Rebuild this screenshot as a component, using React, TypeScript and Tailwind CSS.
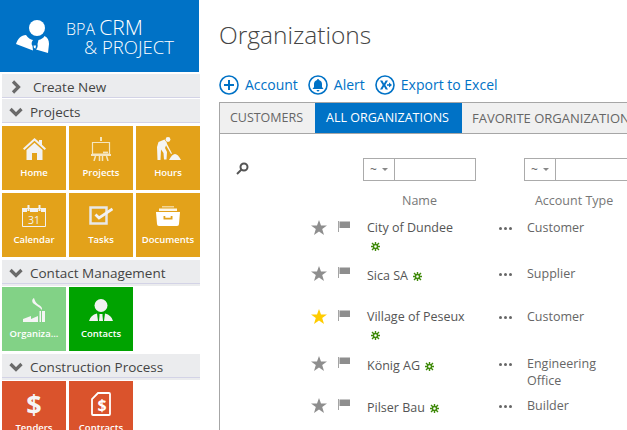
import type { ReactNode } from "react";

const Sans = "font-['Open_Sans','Noto_Sans',sans-serif]";

function HomeIcon() {
  return (
    <svg width="23" height="22" viewBox="0 0 23 22" fill="#f2f2f2">
      <path d="M11.500 0 0 10.500 1.300 12 11.500 2.700 21.700 12 23 10.500l-4-3.700V2h-3v2.100z" />
      <path d="M3.500 12v10h5.500v-7h5v7h5.500V12l-8-7.300z" />
    </svg>
  );
}

function EaselIcon() {
  return (
    <svg width="20" height="24" viewBox="0 0 20 24" fill="none" stroke="#f5e6c0" strokeWidth="1.200">
      <path d="M10 0v4" strokeWidth="2" />
      <path d="M1.500 5.500h17V17h-17z" />
      <path d="M0 18h20" strokeWidth="2" />
      <path d="M4.500 19 3 24M8.500 19v5M11.500 19v5M15.500 19l1.500 5" strokeWidth="1.500" />
      <path d="M12 15.500h5" strokeWidth="1.800" />
    </svg>
  );
}

function WorkerIcon() {
  return (
    <svg width="25" height="23" viewBox="0 0 25 23" fill="#f5f5f5">
      <circle cx="12" cy="2.500" r="2.400" />
      <path d="M2.500 5 8.500 2.500 11 6 9 11l2 4-.5 7.500H8L7.500 16 5 12.500 4.500 23H1.500L1 10z" />
      <path d="m10.500 6 5.500 10.500-1 .6L9.500 7.500z" />
      <path d="M13 23q3-6 6-6t6 6z" />
    </svg>
  );
}

function CalendarIcon() {
  return (
    <svg width="24" height="22" viewBox="0 0 24 22" fill="none" stroke="#f2f2f2">
      <path d="M.5 3.500h23v18H.5z" />
      <path d="M0 3h5v4H0zM8 3h8v4H8zM19 3h5v4h-5z" fill="#f2f2f2" stroke="none" />
      <path d="M6.500 0v6M17.500 0v6" strokeWidth="2" />
      <text x="12" y="18.500" fill="#f2f2f2" stroke="none" fontSize="10.500" textAnchor="middle" fontFamily="Open Sans">31</text>
    </svg>
  );
}

function TaskIcon() {
  return (
    <svg width="24" height="19" viewBox="0 0 24 19" fill="none" stroke="#f2f2f2">
      <path d="M1.500 1.500h16v16h-16z" strokeWidth="2.500" stroke="#e8e8e8" />
      <path d="m6.500 8.500 3.500 3.500 13.500-9" strokeWidth="2.800" />
    </svg>
  );
}

function DrawerIcon() {
  return (
    <svg width="24" height="20" viewBox="0 0 24 20" fill="#fff">
      <path d="M6 0h12v1.500H6z" opacity=".55" />
      <path d="M3 2.500h18V5H3z" opacity=".9" />
      <path fillRule="evenodd" d="M0 6h24l-1 12q0 2-2 2H3q-2 0-2-2zm7.500 4v3.500h9V10h-1.800v1.800H9.300V10z" />
    </svg>
  );
}

function FactoryIcon() {
  return (
    <svg width="22" height="24" viewBox="0 0 22 24" fill="#f5f5f5">
      <path d="M0 24v-3l8-3v3l7-3v6z" />
      <path d="M16.500 13H18v11h-1.500zM19 13h3v11h-3z" />
      <path d="M11 0c-2.500 1.500-2 4-.5 5.500 2 2 5.500 3 8.500 6.500 1-3-3-5-4.500-6C12.500 4.500 12 3 11 0z" />
    </svg>
  );
}

function ContactIcon() {
  return (
    <svg width="24" height="22" viewBox="0 0 24 22" fill="#f2f2f2">
      <circle cx="12" cy="6.500" r="6.500" />
      <path d="M0 22q1.500-6 8-7.500l1 7.500zM24 22q-1.500-6-8-7.500L15 22z" />
      <path d="M10.500 15h3v1.800l.5 5.200h-4l.5-5.200z" />
    </svg>
  );
}

function DollarDocIcon() {
  return (
    <svg width="20" height="24" viewBox="0 0 20 24" fill="none" stroke="#fff" strokeWidth="1.800">
      <path d="M7 1h11q1 0 1 1v20q0 1-1 1H2q-1 0-1-1V7z" />
      <text x="11" y="18.500" fill="#fff" stroke="none" fontSize="16" fontWeight="700" textAnchor="middle" fontFamily="Open Sans">$</text>
    </svg>
  );
}

function PersonLogo() {
  return (
    <svg width="33" height="33" viewBox="0 0 33 33" fill="#fff">
      <circle cx="21" cy="8" r="8" />
      <path d="M0 24C2 18 5 15.500 10 15c2 3 4.500 4.500 7 5-1.500 2-2 4-.5 6l.5 4.500z" />
      <path d="M22.500 20c2.500-.5 5-2 6-4 3 1.500 4.500 4 4.500 8l-1 9-12-3.500c1.500-1.500 2-3.500 1.500-5.500z" />
      <path d="M17.500 25.500h2.500l-.5 3-1.500-.5z" />
    </svg>
  );
}

function Bar({ label, open = true, indent = false }: { label: string; open?: boolean; indent?: boolean }) {
  return (
    <div className="flex h-6 items-center border-b border-[#d3d3e6] bg-[#ebecee] pt-[3px]">
      <span className="flex w-[28px] justify-center">
        <svg width="16" height="14" viewBox="0 0 16 14" fill="none" stroke="#6a6a6a" strokeWidth="3.200">
          {open ? <path d="m2.500 4 5.500 5.500L13.500 4" /> : <path d="m5 1.500 5.500 5.500L5 12.500" />}
        </svg>
      </span>
      <span className={`pt-px text-[13.500px] leading-none text-[#444] ${indent ? "ml-[3px]" : ""}`}>{label}</span>
    </div>
  );
}

function Tile({ label, color, icon }: { label: string; color: string; icon: ReactNode }) {
  return (
    <div className={`flex h-16 w-16 flex-col items-center ${color}`}>
      <div className="flex h-[40px] items-center justify-center pt-[5px]">{icon}</div>
      <span className="text-[9.500px] leading-[14px] font-semibold text-white">{label}</span>
    </div>
  );
}

function Sidebar() {
  return (
    <aside className="flex h-[430px] w-[200px] shrink-0 flex-col overflow-hidden">
      <div className="flex h-[72px] w-[199px] shrink-0 items-center bg-[#0072c6] pl-4 text-white">
        <PersonLogo />
        <div className="ml-[17px] font-light">
          <div className="h-[20px] text-[16px] leading-[20px] whitespace-nowrap">
            BPA <span className="text-[21px]">CRM</span>
          </div>
          <div className="h-[18px] pl-[18px] text-[18.500px] leading-[20px] whitespace-nowrap">&amp; PROJECT</div>
        </div>
      </div>
      <div className="flex flex-col pl-[2px]">
        <div className="mt-[2px]">
          <Bar label="Create New" open={false} indent />
        </div>
        <div className="mt-px">
          <Bar label="Projects" />
        </div>
        <div className="mt-[3px] grid grid-cols-[64px_64px_64px] gap-[3px]">
          <Tile label="Home" color="bg-[#e3a21a]" icon={<HomeIcon />} />
          <Tile label="Projects" color="bg-[#e3a21a]" icon={<EaselIcon />} />
          <Tile label="Hours" color="bg-[#e3a21a]" icon={<WorkerIcon />} />
          <Tile label="Calendar" color="bg-[#e3a21a]" icon={<CalendarIcon />} />
          <Tile label="Tasks" color="bg-[#e3a21a]" icon={<TaskIcon />} />
          <Tile label="Documents" color="bg-[#e3a21a]" icon={<DrawerIcon />} />
        </div>
        <div className="mt-[3px] bg-[#ebecee] pb-[2px]">
          <Bar label="Contact Management" />
        </div>
        <div className="mt-px grid grid-cols-[64px_64px_64px] gap-[3px]">
          <Tile label="Organiza..." color="bg-[#82d286]" icon={<FactoryIcon />} />
          <Tile label="Contacts" color="bg-[#00a300]" icon={<ContactIcon />} />
        </div>
        <div className="mt-[3px] bg-[#ebecee] pb-[2px]">
          <Bar label="Construction Process" />
        </div>
        <div className="mt-px grid grid-cols-[64px_64px_64px] gap-[3px]">
          <Tile label="Tenders" color="bg-[#da532c]" icon={<span className="text-[27px] leading-none font-bold text-[#f5f5f5]">$</span>} />
          <Tile label="Contracts" color="bg-[#da532c]" icon={<DollarDocIcon />} />
        </div>
      </div>
    </aside>
  );
}

function Ring({ children }: { children: ReactNode }) {
  return (
    <svg width="20" height="20" viewBox="0 0 20 20" fill="#0072c6" stroke="none">
      <circle cx="10" cy="10" r="9" fill="none" stroke="#0072c6" strokeWidth="1.600" />
      {children}
    </svg>
  );
}

function Action({ label, icon }: { label: string; icon: ReactNode }) {
  return (
    <div className="flex h-5 items-center gap-[6px] text-[14px] leading-5 text-[#0072c6]">
      <Ring>{icon}</Ring>
      {label}
    </div>
  );
}

function FilterBox() {
  return (
    <div className="flex h-[23px] w-[113px] border border-[#ababab] bg-white">
      <div className="flex w-[31px] items-center justify-between border-r border-[#ababab] pr-[6px] pl-[6px] text-[12px] text-[#666]">
        ~
        <span className="h-0 w-0 border-x-[3px] border-t-[3px] border-x-transparent border-t-[#888]" />
      </div>
    </div>
  );
}

function NewMark() {
  return (
    <svg className="ml-[2px] inline-block align-[-1px]" width="9" height="9" viewBox="0 0 9 9" fill="none" stroke="#3f8a0a" strokeWidth="1.400">
      <path d="M4.500 0v2.500M4.500 6.500V9M0 4.500h2.500M6.500 4.500H9M1 1l2 2M6 6l2 2M8 1 6 3M3 6 1 8" />
      <circle cx="4.500" cy="4.500" r="2" />
    </svg>
  );
}

function Row({ name, type, favorite = false, wrap = false, h }: { name: string; type: ReactNode; favorite?: boolean; wrap?: boolean; h: string }) {
  return (
    <div className={`flex ${h}`}>
      <svg className="mt-px ml-[91px]" width="16" height="15" viewBox="0 0 16 15" fill={favorite ? "#ffcc00" : "#8e8e8e"}>
        <path d="M8 0l2 5.500h6l-4.800 3.500 1.800 6L8 11.500 3 15l1.800-6L0 5.500h6z" />
      </svg>
      <svg className="mt-[2px] ml-[11px]" width="12" height="11" viewBox="0 0 12 11" fill="#8e8e8e">
        <path d="M0 0h.8v11H0zM1.500 0.500H12V7H1.500z" />
      </svg>
      <div className={`ml-[17px] w-[132px] text-[12.500px] leading-[17px] text-[#555] ${wrap ? "" : "pt-[2px]"}`}>
        {name} {wrap ? <div className="pt-px pl-[2px]"><NewMark /></div> : <NewMark />}
      </div>
      <div className="flex h-[17px] w-[13px] items-center justify-between pt-[1px]">
        <span className="h-[3px] w-[3px] rounded-full bg-[#666]" />
        <span className="h-[3px] w-[3px] rounded-full bg-[#666]" />
        <span className="h-[3px] w-[3px] rounded-full bg-[#666]" />
      </div>
      <div className="ml-[15px] w-[90px] text-[12.500px] leading-[17px] text-[#666]">{type}</div>
    </div>
  );
}

export default function App() {
  return (
    <div className={`flex h-[430px] w-[627px] overflow-hidden bg-white ${Sans}`}>
      <Sidebar />
      <main className="min-w-0 flex-1 pl-[19px]">
        <h1 className="pt-[17px] text-[24.500px] leading-[36px] font-light text-[#444]">Organizations</h1>
        <div className="mt-[22px] flex gap-[10px]">
          <Action label="Account" icon={<path d="M9 5h2v4h4v2h-4v4H9v-4H5V9h4z" />} />
          <Action label="Alert" icon={<path d="M10 4q1 0 1 1 3 1 3 4v3l1.500 2h-11L6 12V9q0-3 3-4 0-1 1-1zM8.500 15h3q-.5 1.500-1.500 1.500T8.500 15z" />} />
          <Action
            label="Export to Excel"
            icon={<path d="m5 5.500h2.300L9 8.500l1.700-3H13L10.300 10l2.700 4.500h-2.300L9 11.500l-1.700 3H5L7.700 10zM12 9.200h2V7.500l3 2.500-3 2.500v-1.700h-2z" />}
          />
        </div>
        <div className="mt-[7px] h-[340px] w-[420px] border-t border-l border-[#a6a6a6]">
          <div className="flex h-[31px] border-b border-[#a6a6a6] bg-[#f0f0f0] text-[12.500px] leading-[30px] whitespace-nowrap">
            <span className="w-[95px] pr-[2px] text-center text-[#666]">CUSTOMERS</span>
            <span className="w-[147px] bg-[#0072c6] pr-[2px] text-center text-white">ALL ORGANIZATIONS</span>
            <span className="pl-[10px] text-[13px] text-[#666]">FAVORITE ORGANIZATIONS</span>
          </div>
          <div className="flex pt-[24px]">
            <svg className="mt-[4px] ml-[16px]" width="13" height="13" viewBox="0 0 13 13" fill="none" stroke="#555" strokeWidth="2">
              <circle cx="8" cy="5" r="3.500" />
              <path d="M5.500 7.500 1 12" />
            </svg>
            <div className="ml-[114px] flex gap-[48px]">
              <FilterBox />
              <FilterBox />
            </div>
          </div>
          <div className="mt-[11px] flex h-[27px] text-[12.500px] leading-[17px] text-[#777]">
            <span className="ml-[182px]">Name</span>
            <span className="ml-[98px]">Account Type</span>
          </div>
          <Row name="City of Dundee" type="Customer" wrap h="h-[46px]" />
          <Row name="Sica SA" type="Supplier" h="h-[43px]" />
          <Row name="Village of Peseux" type="Customer" favorite wrap h="h-[47px]" />
          <Row name="König AG" type={<>Engineering<br />Office</>} h="h-[42px]" />
          <Row name="Pilser Bau" type="Builder" h="h-[24px]" />
        </div>
      </main>
    </div>
  );
}
